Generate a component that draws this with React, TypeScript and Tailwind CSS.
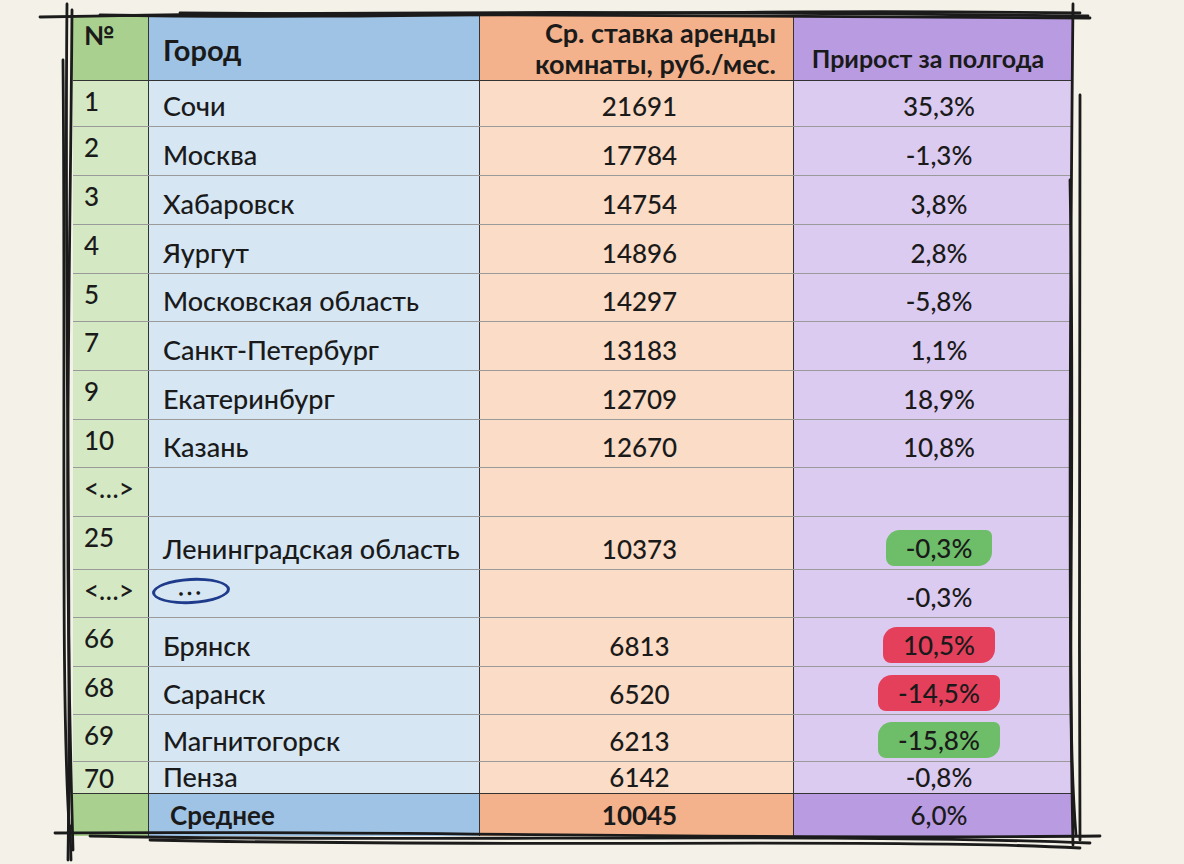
import React from "react";

type Row = {
  n: string;
  city: React.ReactNode;
  rate: string;
  growth: string;
  mark?: "green" | "red";
  h: string;
};

const rows: Row[] = [
  { n: "1", city: "Сочи", rate: "21691", growth: "35,3%", h: "h-[46px]" },
  { n: "2", city: "Москва", rate: "17784", growth: "-1,3%", h: "h-[49px]" },
  { n: "3", city: "Хабаровск", rate: "14754", growth: "3,8%", h: "h-[49px]" },
  { n: "4", city: "Яургут", rate: "14896", growth: "2,8%", h: "h-[49px]" },
  { n: "5", city: "Московская область", rate: "14297", growth: "-5,8%", h: "h-[48px]" },
  { n: "7", city: "Санкт-Петербург", rate: "13183", growth: "1,1%", h: "h-[49px]" },
  { n: "9", city: "Екатеринбург", rate: "12709", growth: "18,9%", h: "h-[49px]" },
  { n: "10", city: "Казань", rate: "12670", growth: "10,8%", h: "h-[48px]" },
  { n: "<…>", city: "", rate: "", growth: "", h: "h-[49px]" },
  { n: "25", city: "Ленинградская область", rate: "10373", growth: "-0,3%", mark: "green", h: "h-[53px]" },
  { n: "<…>", city: "ellipse", rate: "", growth: "-0,3%", h: "h-[48px]" },
  { n: "66", city: "Брянск", rate: "6813", growth: "10,5%", mark: "red", h: "h-[49px]" },
  { n: "68", city: "Саранск", rate: "6520", growth: "-14,5%", mark: "red", h: "h-[48px]" },
  { n: "69", city: "Магнитогорск", rate: "6213", growth: "-15,8%", mark: "green", h: "h-[47px]" },
];

function Growth({ value, mark }: { value: string; mark?: "green" | "red" }) {
  if (!mark) return <span>{value}</span>;
  const bg = mark === "green" ? "bg-[#6dbd69]" : "bg-[#e4405c]";
  return (
    <span className={`${bg} -mx-[20px] -mb-[4px] rounded-tl-[14px] rounded-tr-[6px] rounded-br-[14px] rounded-bl-[8px] px-[20px] pt-[5px] pb-[5px]`}>
      {value}
    </span>
  );
}

function Sketch() {
  return (
    <svg className="pointer-events-none absolute inset-0" width="1184" height="864" viewBox="0 0 1184 864" fill="none">
      <g stroke="#1b1b1b" strokeWidth="2.8" strokeLinecap="round">
        <path d="M40 17 C 300 12, 600 10, 1088 16" />
        <path d="M100 15 C 400 20, 700 8, 1080 13" />
        <path d="M180 13 C 500 16, 800 15, 1090 18" />
        <path d="M67 4 C 64 300, 72 600, 68 860" />
        <path d="M72 10 C 70 300, 63 500, 73 850" />
        <path d="M63 60 C 66 400, 60 700, 70 840" />
        <path d="M1073 4 C 1070 300, 1068 600, 1073 845" />
        <path d="M1080 95 C 1082 400, 1078 600, 1080 840" />
        <path d="M1070 180 C 1076 500, 1065 700, 1076 835" />
        <path d="M55 833 C 400 830, 700 840, 1100 836" />
        <path d="M90 836 C 400 843, 800 832, 1090 843" />
        <path d="M150 840 C 500 848, 900 838, 1080 848" />
        <path d="M70 826 L 71 860" />
      </g>
    </svg>
  );
}

export default function App() {
  const grid = "grid grid-cols-[76px_331px_314px_278px]";
  return (
    <div className="relative h-[864px] w-[1184px] overflow-hidden bg-[#f4f2e8] font-[Lato,sans-serif] text-[26px] leading-none font-medium text-[#1a1a1a]">
      <div className="pl-[73px] pt-[16px]">
        <div className="w-[999px] border-r border-[#3a3a3a]">
          {/* header */}
          <div className={`${grid} h-[65px] border-b border-[#333] font-bold`}>
            <div className="flex items-start border-r border-[#333] bg-[#a9d08e] pl-[11px] pt-[6px] text-[26px]">№</div>
            <div className="flex items-center border-r border-[#333] bg-[#9fc3e5] pl-[14px] pt-[2px] text-[29px]">Город</div>
            <div className="flex flex-col items-end justify-center gap-[4px] border-r border-[#333] bg-[#f4b28c] pr-[17px] text-[27px]">
              <span>Ср. ставка аренды</span>
              <span>комнаты, руб./мес.</span>
            </div>
            <div className="flex items-end justify-center bg-[#b89be0] pb-[9px] pr-[10px] text-[25px]">Прирост за полгода</div>
          </div>

          {rows.map((r, i) => (
            <div key={i} className={`${grid} ${r.h} border-b border-[#9a9a9a]`}>
              <div className="flex items-start border-r border-[#333] bg-[#d3e8c3] pl-[11px] pt-[7px]">{r.n}</div>
              <div className="flex items-end border-r border-[#333] bg-[#d6e6f3] pb-[7px] pl-[14px] text-[27px]">
                {r.city === "ellipse" ? (
                  <span className="mb-[6px] -ml-[11px] inline-flex h-[26px] w-[78px] -rotate-3 items-center justify-center rounded-[50%] border-[3px] border-[#1f3b8c] pb-[10px] text-[24px] font-bold tracking-[3px]">
                    ...
                  </span>
                ) : (
                  r.city
                )}
              </div>
              <div className="flex items-end justify-center border-r border-[#333] bg-[#fbdcc6] pb-[7px] pl-[6px]">{r.rate}</div>
              <div className="flex items-end justify-center bg-[#dccbf0] pb-[7px] pl-[12px]">
                <Growth value={r.growth} mark={r.mark} />
              </div>
            </div>
          ))}

          {/* short row */}
          <div className={`${grid} h-[32px] border-b border-[#333]`}>
            <div className="flex items-start border-r border-[#333] bg-[#d3e8c3] pl-[11px] pt-[3px]">70</div>
            <div className="flex items-end border-r border-[#333] bg-[#d6e6f3] pb-[3px] pl-[14px] text-[27px]">Пенза</div>
            <div className="flex items-end justify-center border-r border-[#333] bg-[#fbdcc6] pb-[3px] pl-[6px]">6142</div>
            <div className="flex items-end justify-center bg-[#dccbf0] pb-[3px] pl-[12px]">-0,8%</div>
          </div>

          {/* footer */}
          <div className={`${grid} h-[42px]`}>
            <div className="border-r border-[#333] bg-[#a9d08e]" />
            <div className="flex items-center border-r border-[#333] bg-[#9fc3e5] pl-[21px] font-bold">Среднее</div>
            <div className="flex items-center justify-center border-r border-[#333] bg-[#f4b28c] pl-[6px] font-bold">10045</div>
            <div className="flex items-center justify-center bg-[#b89be0] pl-[12px]">6,0%</div>
          </div>
        </div>
      </div>
      <Sketch />
    </div>
  );
}
